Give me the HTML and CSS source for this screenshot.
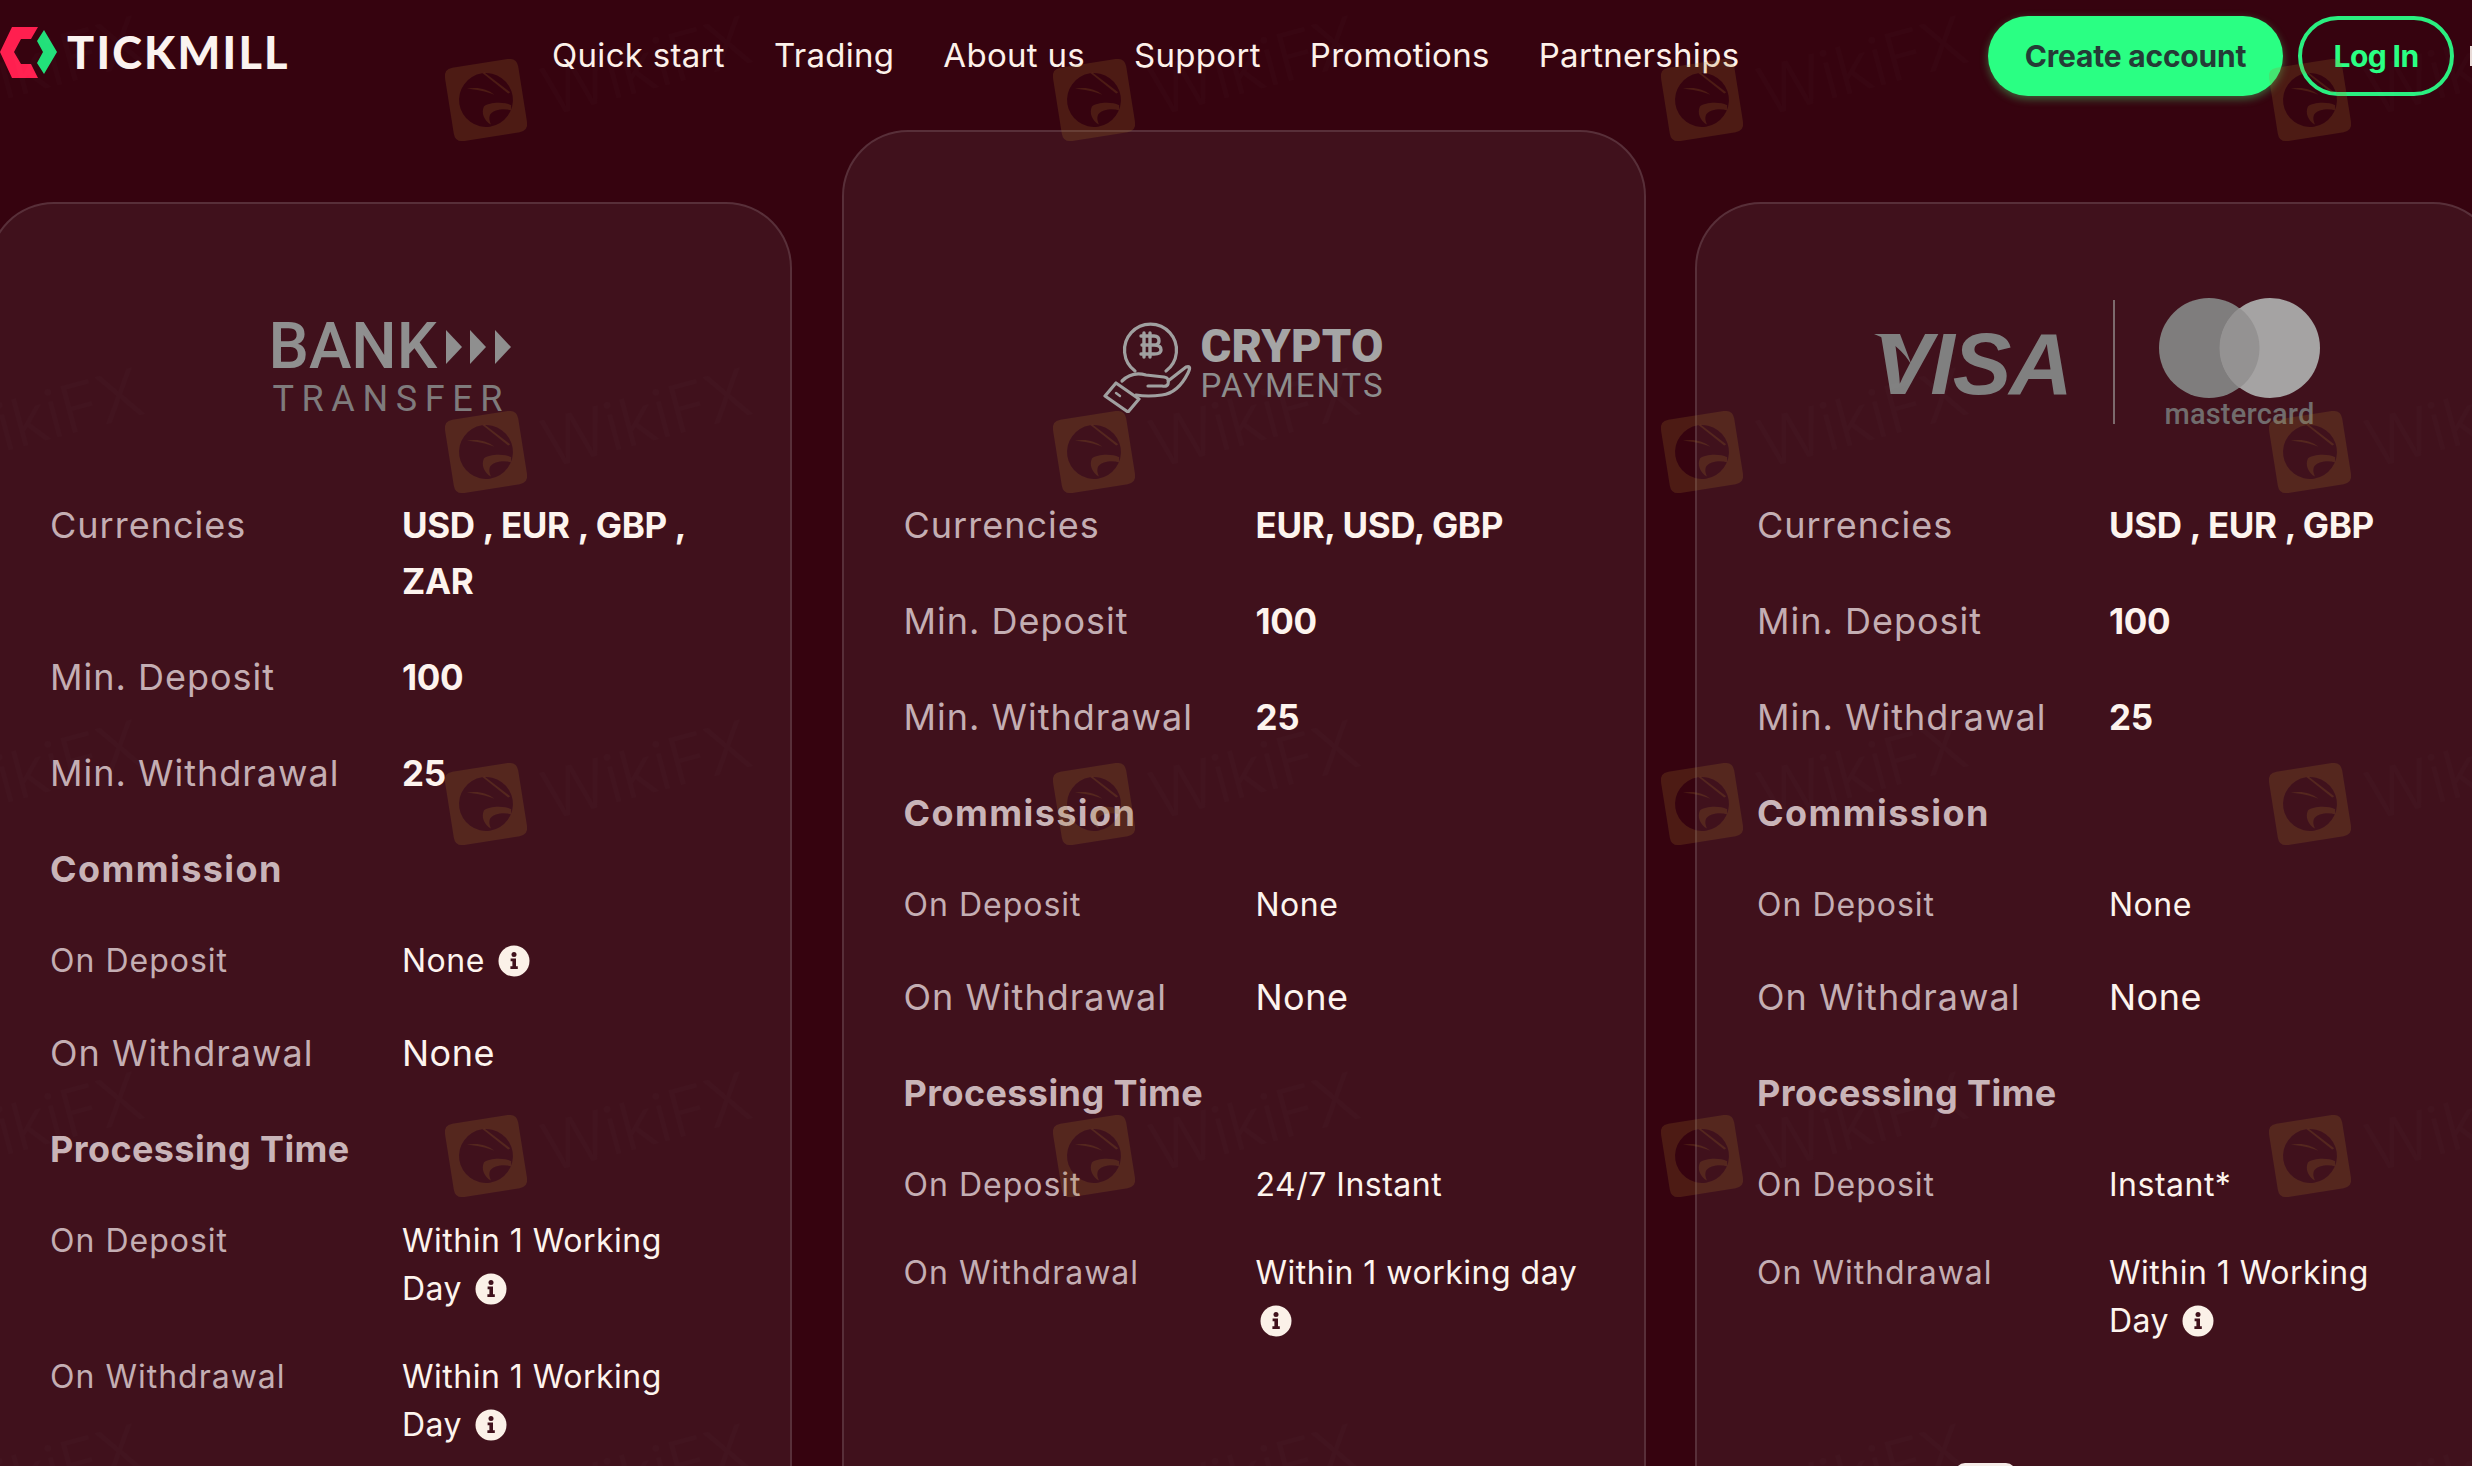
FILE: index.html
```html
<!DOCTYPE html>
<html lang="en">
<head>
<meta charset="utf-8">
<title>Tickmill</title>
<link rel="stylesheet" href="styles.css">
</head>
<body>
<div class="page">
  <header class="topbar">
    <a class="brand">
      <svg class="brand-mark" width="58" height="80" viewBox="0 0 58 80">
        <polygon fill="#ff1f4f" points="12,27 38,27 31,39 21,39 14,52 21,64 31,64 38,78 12,78 0,52"/>
        <polygon fill="#22e07a" points="44,30 57,52 44,74 37,63 43,52 37,41"/>
      </svg>
      <span class="brand-name">TICKMILL</span>
    </a>
    <nav class="nav">
      <a>Quick start</a><a>Trading</a><a>About us</a><a>Support</a><a>Promotions</a><a>Partnerships</a>
    </nav>
    <div class="actions">
      <a class="btn btn-primary">Create account</a>
      <a class="btn btn-outline">Log In</a>
    </div>
    <span class="lang-edge"></span>
  </header>

  <main class="cards">
    <section class="card card-side">
      <div class="logo-slot logo-bank">
        <div class="bank">
          <div class="bank-top">
            <span class="bank-word">BANK</span>
            <svg width="66" height="34" viewBox="0 0 66 34" fill="#8f8f8f"><polygon points="0,0 16,17 0,34"/><polygon points="24,0 40,17 24,34"/><polygon points="49,0 65,17 49,34"/></svg>
          </div>
          <div class="bank-sub">TRANSFER</div>
        </div>
      </div>
      <div class="row lg"><span class="k">Currencies</span><span class="v b">USD , EUR , GBP ,<br>ZAR</span></div>
      <div class="row lg"><span class="k">Min. Deposit</span><span class="v b">100</span></div>
      <div class="row lg"><span class="k">Min. Withdrawal</span><span class="v b">25</span></div>
      <div class="row lg"><span class="k b h-comm">Commission</span></div>
      <div class="row sm"><span class="k">On Deposit</span><span class="v">None<svg class="info" viewBox="0 0 32 32"><use href="#i-info"/></svg></span></div>
      <div class="row lg"><span class="k">On Withdrawal</span><span class="v">None</span></div>
      <div class="row lg"><span class="k b h-proc">Processing Time</span></div>
      <div class="row sm"><span class="k">On Deposit</span><span class="v">Within 1 Working<br>Day<svg class="info" viewBox="0 0 32 32"><use href="#i-info"/></svg></span></div>
      <div class="row sm"><span class="k">On Withdrawal</span><span class="v">Within 1 Working<br>Day<svg class="info" viewBox="0 0 32 32"><use href="#i-info"/></svg></span></div>
    </section>

    <section class="card card-mid">
      <div class="logo-slot logo-crypto">
        <div class="crypto">
          <svg class="crypto-icon" width="92" height="92" viewBox="0 0 92 92" fill="none" stroke="#a0a0a0" stroke-width="3.2" stroke-linejoin="round" stroke-linecap="round">
            <path d="M33 50 A26 26 0 1 1 64 50"/>
            <path d="M42 12 V36 M48 12 V36 M39 15 H52 Q57 15 57 20 Q57 24 52 24 H40 M52 24 Q59 24 59 29 Q59 33 52 33 H39" stroke-width="3.4"/>
            <path d="M20 60 Q30 50 44 54 L62 56 Q68 57 66 63 Q65 66 60 65 L46 65 M66 60 L84 46 Q90 44 86 52 Q76 72 60 74 Q46 76 34 74"/>
            <path d="M14 62 L37 78 L26 91 L3 75 Z"/>
            <path d="M14 72 L18 75" stroke-width="2.4"/>
          </svg>
          <div class="crypto-text">
            <div class="crypto-top">CRYPTO</div>
            <div class="crypto-sub">PAYMENTS</div>
          </div>
        </div>
      </div>
      <div class="row lg"><span class="k">Currencies</span><span class="v b">EUR, USD, GBP</span></div>
      <div class="row lg"><span class="k">Min. Deposit</span><span class="v b">100</span></div>
      <div class="row lg"><span class="k">Min. Withdrawal</span><span class="v b">25</span></div>
      <div class="row lg"><span class="k b h-comm">Commission</span></div>
      <div class="row sm"><span class="k">On Deposit</span><span class="v">None</span></div>
      <div class="row lg"><span class="k">On Withdrawal</span><span class="v">None</span></div>
      <div class="row lg"><span class="k b h-proc">Processing Time</span></div>
      <div class="row sm"><span class="k">On Deposit</span><span class="v">24/7 Instant</span></div>
      <div class="row sm"><span class="k">On Withdrawal</span><span class="v">Within 1 working day<br><svg class="info info-solo" viewBox="0 0 32 32"><use href="#i-info"/></svg></span></div>
    </section>

    <section class="card card-side">
      <div class="logo-slot logo-cards">
        <div class="paycards">
          <div class="visa"><svg class="visa-flag" width="46" height="36" viewBox="0 0 46 36"><path fill="#808080" d="M0 2 H26 L38 34 Q26 12 0 2 Z"/></svg><span class="visa-word">VISA</span></div>
          <span class="paycards-rule"></span>
          <div class="mc">
            <svg width="162" height="102" viewBox="0 0 162 102">
              <ellipse cx="50" cy="51" rx="50" ry="50" fill="#7f7d7d"/>
              <ellipse cx="111" cy="51" rx="50" ry="50" fill="#a5a3a3"/>
              <path fill="#949292" d="M80.5 11 A50 50 0 0 1 80.5 91 A50 50 0 0 1 80.5 11 Z"/>
            </svg>
            <span class="mc-word">mastercard</span>
          </div>
        </div>
      </div>
      <div class="row lg"><span class="k">Currencies</span><span class="v b">USD , EUR , GBP</span></div>
      <div class="row lg"><span class="k">Min. Deposit</span><span class="v b">100</span></div>
      <div class="row lg"><span class="k">Min. Withdrawal</span><span class="v b">25</span></div>
      <div class="row lg"><span class="k b h-comm">Commission</span></div>
      <div class="row sm"><span class="k">On Deposit</span><span class="v">None</span></div>
      <div class="row lg"><span class="k">On Withdrawal</span><span class="v">None</span></div>
      <div class="row lg"><span class="k b h-proc">Processing Time</span></div>
      <div class="row sm"><span class="k">On Deposit</span><span class="v">Instant*</span></div>
      <div class="row sm"><span class="k">On Withdrawal</span><span class="v">Within 1 Working<br>Day<svg class="info" viewBox="0 0 32 32"><use href="#i-info"/></svg></span></div>
    </section>
  </main>

  <span class="peek"></span>

  <svg class="watermark" width="2472" height="1466" aria-hidden="true">
    <defs>
      <symbol id="i-info" viewBox="0 0 32 32">
        <circle cx="16" cy="16" r="15.5" fill="#fbf1e8"/>
        <circle cx="16" cy="9.6" r="2.5" fill="#40111c"/>
        <path fill="#40111c" d="M12.6 13.4 H18 V21.2 H19.8 V24 H12.4 V21.2 H14.4 V16.2 H12.6 Z"/>
      </symbol>
      <pattern id="wm" x="182" y="-76" width="608" height="352" patternUnits="userSpaceOnUse">
        <g transform="translate(304 176) rotate(-9)">
          <path fill="#a97b28" fill-opacity=".2" fill-rule="evenodd" d="M-28 -37 H28 Q37 -37 37 -28 V28 Q37 37 28 37 H-28 Q-37 37 -37 28 V-28 Q-37 -37 -28 -37 Z M0 -27 A27 27 0 1 0 0 27 A27 27 0 1 0 0 -27 Z"/>
          <g fill="#a97b28" fill-opacity=".2">
            <path d="M-3 6 C-7 12 -5 20 1 25 C-1 18 1 13 8 12 C13 11 19 12 23 14 L24 9 C16 4 3 3 -3 6 Z"/>
            <path d="M1 -27 L3 -27 L25 -4 L23 -3 Z"/>
            <path d="M-17 -14 C-8 -15 3 -11 9 -4 C2 -8 -8 -12 -17 -14 Z"/>
          </g>
        </g>
        <text class="wm-text" transform="translate(368 192) rotate(-15)">WikiFX</text>
      </pattern>
    </defs>
    <rect width="2472" height="1466" fill="url(#wm)"/>
  </svg>
</div>
</body>
</html>
```
FILE: styles.css
```css
* { box-sizing: border-box; }
html, body { margin: 0; padding: 0; background: #36030f; }
body { font-family: "Inter", "Open Sans", sans-serif; color: #fbf1e8; }
a { color: inherit; text-decoration: none; }

.page { position: relative; width: 2472px; height: 1466px; overflow: hidden; background: #36030f; }

.topbar { display: flex; align-items: center; height: 112px; }
.brand { display: flex; align-items: flex-start; width: 552px; height: 100%; flex: none; }
.brand-mark { display: block; flex: none; }
.brand-name { margin: 28px 0 0 9px; font-family: "Lato", sans-serif; font-weight: 900; font-size: 45px; line-height: 48px; letter-spacing: 2.2px; color: #fbf3f0; }
.nav { display: flex; gap: 49px; margin-top: -2px; font-size: 33px; letter-spacing: .3px; color: #fdf1ea; white-space: nowrap; }
.actions { display: flex; gap: 15px; margin-left: auto; margin-right: 18px; align-items: center; }
.btn { display: flex; align-items: center; justify-content: center; height: 80px; border-radius: 40px; font-size: 30px; font-weight: 700; letter-spacing: -0.2px; }
.btn-primary { width: 295px; background: #2aff83; color: #243c36; box-shadow: 0 3px 8px rgba(70,220,110,.45); }
.btn-outline { width: 156px; border: 4px solid #2aef80; color: #2aff83; letter-spacing: -.6px; }
.lang-edge { position: absolute; right: 0; top: 46px; width: 2px; height: 20px; background: #e8dad6; }

.cards { display: flex; gap: 49.5px; margin: 18px 0 0 -12px; width: 2560px; }
.card { flex: none; width: 804px; min-height: 1500px; padding: 0 60px; background: #40111c; border: 2px solid rgba(255,255,255,.13); border-radius: 66px; }
.card-side { margin-top: 72px; }

.logo-slot { display: flex; align-items: center; justify-content: center; margin: 0 -60px; }
.logo-bank { height: 293px; padding-top: 35px; }
.logo-crypto { height: 365px; padding-top: 104px; }
.logo-cards { height: 293px; padding-top: 23px; }

.row { display: grid; grid-template-columns: 352px 1fr; margin-bottom: 40px; }
.row.lg { font-size: 36px; line-height: 56px; }
.row.sm { font-size: 32px; line-height: 48px; }
.k { color: #c4aeb3; white-space: nowrap; letter-spacing: 1px; }
.v { color: #fdf4ee; white-space: nowrap; letter-spacing: .5px; }
.v.b { font-size: 35px; font-weight: 700; letter-spacing: -.35px; }
.k.b { color: #c9b4b8; font-weight: 700; }
.k.h-comm { letter-spacing: 1.4px; }
.k.h-proc { letter-spacing: .4px; }
.info { display: inline-block; width: 32px; height: 32px; margin-left: 13px; vertical-align: -5px; }
.info-solo { margin-left: 4px; }

.bank { width: 243px; }
.bank-top { display: flex; align-items: center; justify-content: space-between; }
.bank-word { font-family: "Roboto", sans-serif; font-size: 64px; line-height: 56px; font-weight: 500; color: #8f8f8f; }
.bank-sub { margin-top: 6px; font-family: "Roboto", sans-serif; font-size: 36px; line-height: 36px; letter-spacing: 7.6px; color: #7f7b7c; white-space: nowrap; padding-left: 4px; }

.crypto { display: flex; align-items: center; gap: 6px; }
.crypto-icon { display: block; }
.crypto-text { font-family: "Roboto", sans-serif; margin-bottom: 9px; }
.crypto-top { font-size: 47px; line-height: 47px; font-weight: 900; color: #a5a5a5; letter-spacing: .2px; }
.crypto-sub { font-size: 33px; line-height: 34px; color: #8d8d8d; letter-spacing: 2px; }

.paycards { display: flex; align-items: center; }
.visa { position: relative; display: block; width: 194px; margin-top: 4px; }
.visa-word { display: block; font-family: "Liberation Sans", sans-serif; font-weight: 700; font-style: italic; font-size: 88px; line-height: 76px; color: #808080; letter-spacing: -2px; text-align: right; }
.visa-flag { position: absolute; left: 0; top: 6px; }
.paycards-rule { width: 2px; height: 124px; margin: 0 44px 0 45px; background: #7d6a6d; }
.mc { display: flex; flex-direction: column; align-items: center; width: 162px; }
.mc svg { display: block; }
.mc-word { font-family: "Roboto", sans-serif; font-weight: 500; font-size: 29px; line-height: 28px; margin-top: 1px; letter-spacing: .2px; color: #716c6d; }

.peek { position: absolute; left: 1955px; top: 1463px; width: 61px; height: 20px; border-radius: 12px; background: #f5ece8; }
.watermark { position: absolute; left: 0; top: 0; pointer-events: none; }
.wm-text { font-family: "Inter", sans-serif; font-size: 66px; font-weight: 300; fill: #ffffff; fill-opacity: .01; }
```
